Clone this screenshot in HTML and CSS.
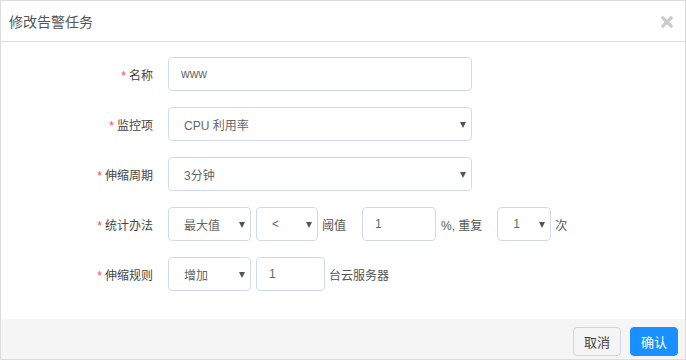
FILE: index.html
```html
<!DOCTYPE html>
<html>
    <head>
        <title>修改告警任务</title>
        <meta charset="utf-8">
        <link rel="stylesheet" href="styles.css">
    </head>
    <body>
        <div class="dialog">
            <div class="dialog-header">
                <h4>修改告警任务</h4>
                <svg class="close" width="12" height="12" viewBox="0 0 12 12">
                    <path d="M1.8 1.8 L10.2 10.2 M10.2 1.8 L1.8 10.2" stroke="#cacaca" stroke-width="3.2" stroke-linecap="round"/>
                </svg>
            </div>
            <div class="dialog-body">
                <div class="form-row">
                    <label class="form-label"><i>*</i>名称</label>
                    <input type="text" class="field wide" value="www">
                </div>
                <div class="form-row">
                    <label class="form-label"><i>*</i>监控项</label>
                    <span class="select wide"><span class="value">CPU 利用率</span></span>
                </div>
                <div class="form-row">
                    <label class="form-label"><i>*</i>伸缩周期</label>
                    <span class="select wide"><span class="value">3分钟</span></span>
                </div>
                <div class="form-row">
                    <label class="form-label"><i>*</i>统计办法</label>
                    <span class="select w83"><span class="value">最大值</span></span>
                    <span class="select w62 ml5"><span class="value">&lt;</span></span>
                    <span class="text ml4">阈值</span>
                    <input type="text" class="field w74 ml16" value="1">
                    <span class="text ml5">%, 重复</span>
                    <span class="select w54 ml15"><span class="value">1</span></span>
                    <span class="text ml4">次</span>
                </div>
                <div class="form-row">
                    <label class="form-label"><i>*</i>伸缩规则</label>
                    <span class="select w83"><span class="value">增加</span></span>
                    <input type="text" class="field w69 ml5" value="1">
                    <span class="text ml4">台云服务器</span>
                </div>
            </div>
            <div class="dialog-footer">
                <button class="btn">取消</button>
                <button class="btn primary">确认</button>
            </div>
        </div>
    </body>
</html>
```

FILE: styles.css
```css
body {
    margin: 0;
    font-family: "Liberation Sans", "Noto Sans CJK SC", sans-serif;
    color: #444;
    background: #fff;
}

.dialog {
    width: 686px;
    height: 360px;
    box-sizing: border-box;
    border: 1px solid #dcdcdc;
    display: flex;
    flex-direction: column;
}

.dialog-header {
    height: 40px;
    border-bottom: 1px solid #dcdcdc;
    display: flex;
    align-items: center;
    justify-content: space-between;
    padding: 0 12px 0 8px;
}

.dialog-header h4 {
    margin: 0;
    font-size: 14px;
    font-weight: normal;
    color: #555;
}

.close {
    margin-top: 1px;
}

.dialog-body {
    height: 277px;
    box-sizing: border-box;
    padding-top: 15px;
}

.form-row {
    display: flex;
    align-items: center;
    height: 34px;
    margin-bottom: 16px;
    font-size: 12px;
}

.form-label {
    width: 152px;
    margin-right: 15px;
    text-align: right;
    color: #444;
}

.form-label i {
    font-style: normal;
    color: #f04b4b;
    margin-right: 3px;
}

.field,
.select {
    height: 34px;
    box-sizing: border-box;
    border: 1px solid #d0dbe8;
    border-radius: 4px;
    font-family: inherit;
    font-size: 12px;
    color: #666;
    background: #fff;
}

.field {
    padding: 0 12px;
    outline: none;
}

.select {
    position: relative;
    display: flex;
    align-items: center;
    padding-left: 15px;
}

.select::after {
    content: "";
    position: absolute;
    right: 5px;
    top: 14px;
    border-left: 3.5px solid transparent;
    border-right: 3.5px solid transparent;
    border-top: 6px solid #555;
}

.wide { width: 304px; }
.w83 { width: 83px; }
.w62 { width: 62px; }
.w74 { width: 74px; }
.w69 { width: 69px; }
.w54 { width: 54px; }

.ml4 { margin-left: 4px; }
.ml5 { margin-left: 5px; }
.ml15 { margin-left: 15px; }
.ml16 { margin-left: 16px; }

.text {
    color: #555;
}

.dialog-footer {
    flex: 1;
    background: #f5f5f5;
    display: flex;
    justify-content: flex-end;
    align-items: flex-start;
    padding: 8px 7px 0 0;
    gap: 9px;
}

.btn {
    width: 48px;
    height: 29px;
    border-radius: 4px;
    border: 1px solid #cbd7e5;
    background: #f5f5f5;
    color: #444;
    font-family: inherit;
    font-size: 13px;
    padding: 0;
    cursor: pointer;
}

.btn.primary {
    border-color: #1890ff;
    background: #1890ff;
    color: #fff;
}
```
